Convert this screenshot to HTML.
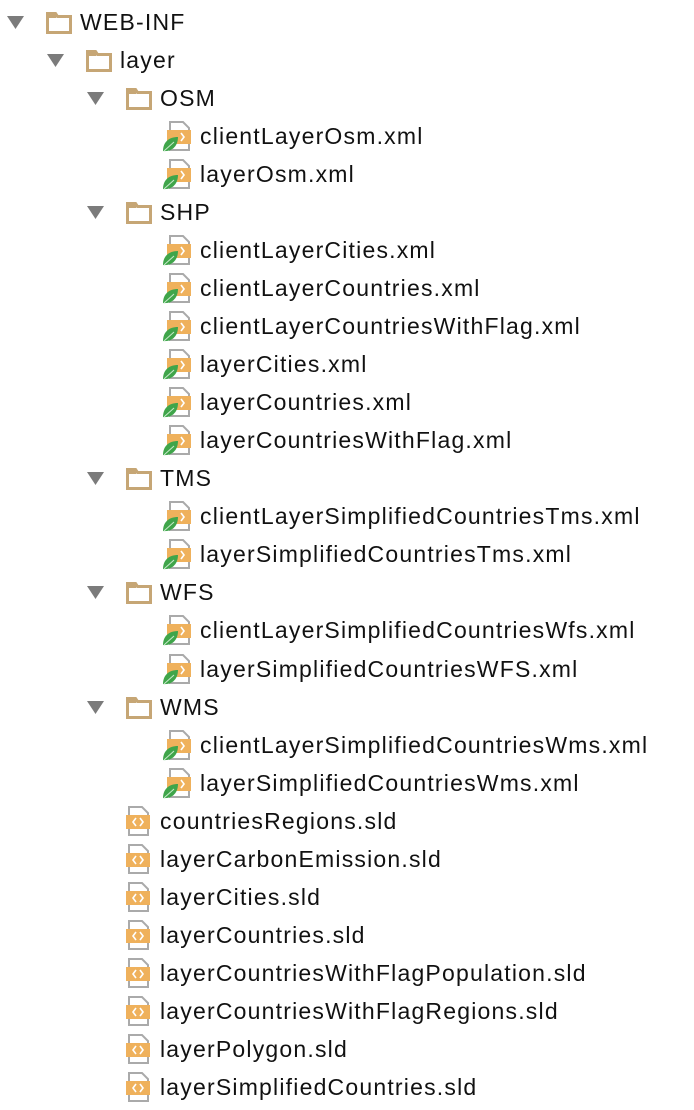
<!DOCTYPE html>
<html><head><style>
body{margin:0;width:694px;height:1110px;background:#fff;font-family:"Liberation Sans",sans-serif;font-size:23px;letter-spacing:1.2px;color:#111;position:relative;overflow:hidden}
.r{position:absolute;height:38px;line-height:38px;white-space:nowrap}
.r span{position:absolute;top:0}
svg{position:absolute}
</style></head><body>
<svg width="0" height="0" style="position:absolute">
<defs>
<g id="tri"><path d="M0 0H17L8.5 13Z" fill="#7b7b7b"/></g>
<g id="fold"><path d="M1.5 3.5V1.5H9.5L11.5 4.5H24.5V20.5H1.5Z" fill="#fff" stroke="#c6a675" stroke-width="3"/><rect x="1" y="3" width="9" height="3" fill="#c6a675"/></g>
<g id="sld"><path d="M3 1H16L22 7V29H3Z" fill="#fff" stroke="#aaa" stroke-width="2"/><rect x="0" y="9" width="24" height="14" fill="#efb15c"/><path d="M10 12L7 16L10 20M14 12L17 16L14 20" stroke="#fff" stroke-width="1.6" fill="none"/></g>
<g id="xml"><path d="M8 1H21L27 7V29H8Z" fill="#fff" stroke="#aaa" stroke-width="2"/><rect x="5" y="9" width="24" height="14" fill="#efb15c"/><path d="M19 12L22 16L19 20" stroke="#fff" stroke-width="1.6" fill="none"/><path d="M1 30C1 21 7 16 16 16C16 25 10 31 1 30Z" fill="#3fa54a"/><path d="M2 30L12 21" stroke="#c8eacb" stroke-width="1"/></g>
</defs></svg>
<div id="t"></div>
<script>
var rows=[
[0,'f','WEB-INF'],[1,'f','layer'],[2,'f','OSM'],[3,'x','clientLayerOsm.xml'],[3,'x','layerOsm.xml'],
[2,'f','SHP'],[3,'x','clientLayerCities.xml'],[3,'x','clientLayerCountries.xml'],[3,'x','clientLayerCountriesWithFlag.xml'],[3,'x','layerCities.xml'],[3,'x','layerCountries.xml'],[3,'x','layerCountriesWithFlag.xml'],
[2,'f','TMS'],[3,'x','clientLayerSimplifiedCountriesTms.xml'],[3,'x','layerSimplifiedCountriesTms.xml'],
[2,'f','WFS'],[3,'x','clientLayerSimplifiedCountriesWfs.xml'],[3,'x','layerSimplifiedCountriesWFS.xml'],
[2,'f','WMS'],[3,'x','clientLayerSimplifiedCountriesWms.xml'],[3,'x','layerSimplifiedCountriesWms.xml'],
[2,'s','countriesRegions.sld'],[2,'s','layerCarbonEmission.sld'],[2,'s','layerCities.sld'],[2,'s','layerCountries.sld'],[2,'s','layerCountriesWithFlagPopulation.sld'],[2,'s','layerCountriesWithFlagRegions.sld'],[2,'s','layerPolygon.sld'],[2,'s','layerSimplifiedCountries.sld']];
var h='';
rows.forEach(function(r,i){
 var y=3+i*38.03, lv=r[0], t=r[1], s='';
 if(t=='f'){var b=lv*40;
  s+='<svg style="left:'+(7+b)+'px;top:13px" width="18" height="14"><use href="#tri"/></svg>';
  s+='<svg style="left:'+(46+b)+'px;top:9px" width="27" height="23"><use href="#fold"/></svg>';
  s+='<span style="left:'+(80+b)+'px">'+r[2]+'</span>';}
 else if(t=='x'){s+='<svg style="left:162px;top:4px" width="30" height="32"><use href="#xml"/></svg><span style="left:200px">'+r[2]+'</span>';}
 else {s+='<svg style="left:126px;top:4px" width="25" height="31"><use href="#sld"/></svg><span style="left:160px">'+r[2]+'</span>';}
 h+='<div class="r" style="top:'+y+'px;left:0;width:694px">'+s+'</div>';
});
document.getElementById('t').innerHTML=h;
</script>
</body></html>
